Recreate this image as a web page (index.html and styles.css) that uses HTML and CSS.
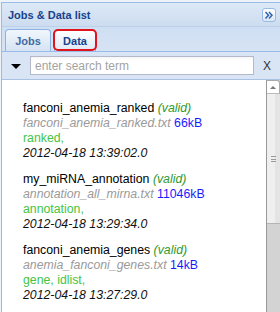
FILE: index.html
```html
<!DOCTYPE html>
<html>
<head>
  <meta charset="UTF-8">
  <title>Jobs &amp; Data list</title>
  <link rel="stylesheet" href="styles.css">
</head>
<body>
  <div class="panel">
    <!-- Panel header with collapse button -->
    <div class="panel-header">
      <span class="panel-title">Jobs &amp; Data list</span>
      <span class="collapse-btn">
        <svg width="14" height="14" viewBox="0 0 14 14">
          <path d="M3.5 4 L6.5 7.2 L3.5 10.5 M7 4 L10 7.2 L7 10.5" fill="none" stroke="#2f64ad" stroke-width="1.5"/>
        </svg>
      </span>
    </div>

    <div class="tab-strip">
      <div class="tab">Jobs</div>
      <div class="tab tab-active">Data</div>
    </div>

    <div class="toolbar">
      <span class="menu-arrow"></span>
      <input type="text" class="search" placeholder="enter search term">
      <span class="clear">X</span>
    </div>

    <div class="list-wrap">
      <div class="list">
        <div class="item">
          <div><span class="name">fanconi_anemia_ranked</span> <span class="valid">(valid)</span></div>
          <div><span class="file">fanconi_anemia_ranked.txt</span> <span class="size">66kB</span></div>
          <div class="types">ranked,</div>
          <div class="date">2012-04-18 13:39:02.0</div>
        </div>
        <div class="item">
          <div><span class="name">my_miRNA_annotation</span> <span class="valid">(valid)</span></div>
          <div><span class="file">annotation_all_mirna.txt</span> <span class="size">11046kB</span></div>
          <div class="types">annotation,</div>
          <div class="date">2012-04-18 13:29:34.0</div>
        </div>
        <div class="item">
          <div><span class="name">fanconi_anemia_genes</span> <span class="valid">(valid)</span></div>
          <div><span class="file">anemia_fanconi_genes.txt</span> <span class="size">14kB</span></div>
          <div class="types">gene, idlist,</div>
          <div class="date">2012-04-18 13:27:29.0</div>
        </div>
      </div>
      <div class="scrollbar">
        <div class="scroll-up"><span class="up-arrow"></span></div>
        <div class="scroll-thumb"><span class="grip"></span></div>
      </div>
    </div>
  </div>
</body>
</html>
```

FILE: styles.css
```css
* {
  box-sizing: border-box;
}
html, body {
  margin: 0;
  height: 100%;
  overflow: hidden;
}
body {
  background-color: #eef3fa;
  padding-top: 2px;
  font-family: "Liberation Sans", Arial, sans-serif;
}
.panel {
  margin-left: 1px;
  height: 310px;
  border-left: 1px solid #99bbe8;
  border-top: 1px solid #99bbe8;
  display: flex;
  flex-direction: column;
}
.panel-header {
  height: 24px;
  display: flex;
  align-items: center;
  justify-content: space-between;
  padding: 0 4px 0 6px;
  background: linear-gradient(#dde9f7, #cddcef);
  border-bottom: 1px solid #bcd0ea;
}
.panel-title {
  font-size: 11px;
  font-weight: bold;
  color: #15428b;
}
.collapse-btn {
  width: 14px;
  height: 14px;
  margin-top: 1px;
  border: 1px solid #99bbe8;
  border-radius: 3px;
  background: linear-gradient(#ffffff, #dce7f5);
  display: flex;
}
.collapse-btn svg {
  margin: -1px;
}
.tab-strip {
  height: 25px;
  display: flex;
  align-items: flex-end;
  gap: 3px;
  padding-left: 3px;
  background: linear-gradient(#cfdff3, #d6e3f3);
  border-bottom: 1px solid #99bbe8;
}
.tab {
  width: 46px;
  height: 22px;
  display: flex;
  align-items: center;
  justify-content: center;
  font-size: 11px;
  font-weight: bold;
  color: #416aa3;
  border: 1px solid #8db2e3;
  border-bottom: none;
  border-radius: 4px 4px 0 0;
  background: linear-gradient(#f1f6fc, #d6e3f3);
}
.tab-active {
  position: relative;
  width: 42px;
  color: #15428b;
  background: linear-gradient(#ffffff, #dfe8f6);
}
/* red highlight around the selected tab */
.tab-active::after {
  content: "";
  position: absolute;
  left: -2px;
  right: -2px;
  top: -1px;
  bottom: 0;
  border: 2px solid #e0141b;
  border-radius: 5px;
}
.toolbar {
  height: 28px;
  display: flex;
  align-items: center;
  padding-left: 9px;
  background-color: #d9e5f4;
  border-bottom: 1px solid #a9c2e4;
}
.menu-arrow {
  width: 0;
  height: 0;
  border-left: 5px solid transparent;
  border-right: 5px solid transparent;
  border-top: 5px solid #000;
  margin-top: 1px;
}
.search {
  width: 224px;
  height: 19px;
  margin-left: 9px;
  padding: 0 4px;
  border: 1px solid #b5b8c8;
  background: linear-gradient(#f6f6f6, #ffffff 4px);
  font-family: inherit;
  font-size: 12px;
  outline: none;
}
.search::placeholder {
  color: #a3a3a3;
}
.clear {
  margin-left: 9px;
  font-size: 12px;
  color: #333;
}
.list-wrap {
  flex: 1;
  display: flex;
  min-height: 0;
}
.list {
  flex: 1;
  background-color: #fff;
  padding: 21px 0 0 21px;
  font-size: 12.3px;
  line-height: 15px;
  overflow: hidden;
}
.item {
  margin-bottom: 11px;
}
.name {
  color: #000;
}
.valid {
  font-style: italic;
  color: #2f9a2f;
}
.file {
  font-style: italic;
  color: #9a9a9a;
}
.size {
  color: #1a1aff;
}
.types {
  color: #44c444;
}
.date {
  font-style: italic;
  color: #111;
}
.scrollbar {
  width: 14px;
  display: flex;
  flex-direction: column;
  background-color: #d3d3d3;
  border-left: 1px solid #999;
}
.scroll-up {
  height: 14px;
  display: flex;
  align-items: center;
  justify-content: center;
  background-color: #fff;
  border-top: 1px solid #aaa;
  border-right: 1px solid #aaa;
  border-bottom: 1px solid #bbb;
  border-radius: 0 3px 0 0;
}
.up-arrow {
  width: 0;
  height: 0;
  border-left: 3px solid transparent;
  border-right: 3px solid transparent;
  border-bottom: 3px solid #777;
}
.scroll-thumb {
  height: 130px;
  display: flex;
  align-items: center;
  justify-content: center;
  background: linear-gradient(to right, #efefef 60%, #e4e4e4 60%);
  border-bottom: 1px solid #b5b5b5;
}
.grip {
  width: 5px;
  height: 6px;
  border-top: 1px solid #999;
  border-bottom: 1px solid #999;
  background: linear-gradient(transparent 2px, #999 2px, #999 3px, transparent 3px);
}
```
